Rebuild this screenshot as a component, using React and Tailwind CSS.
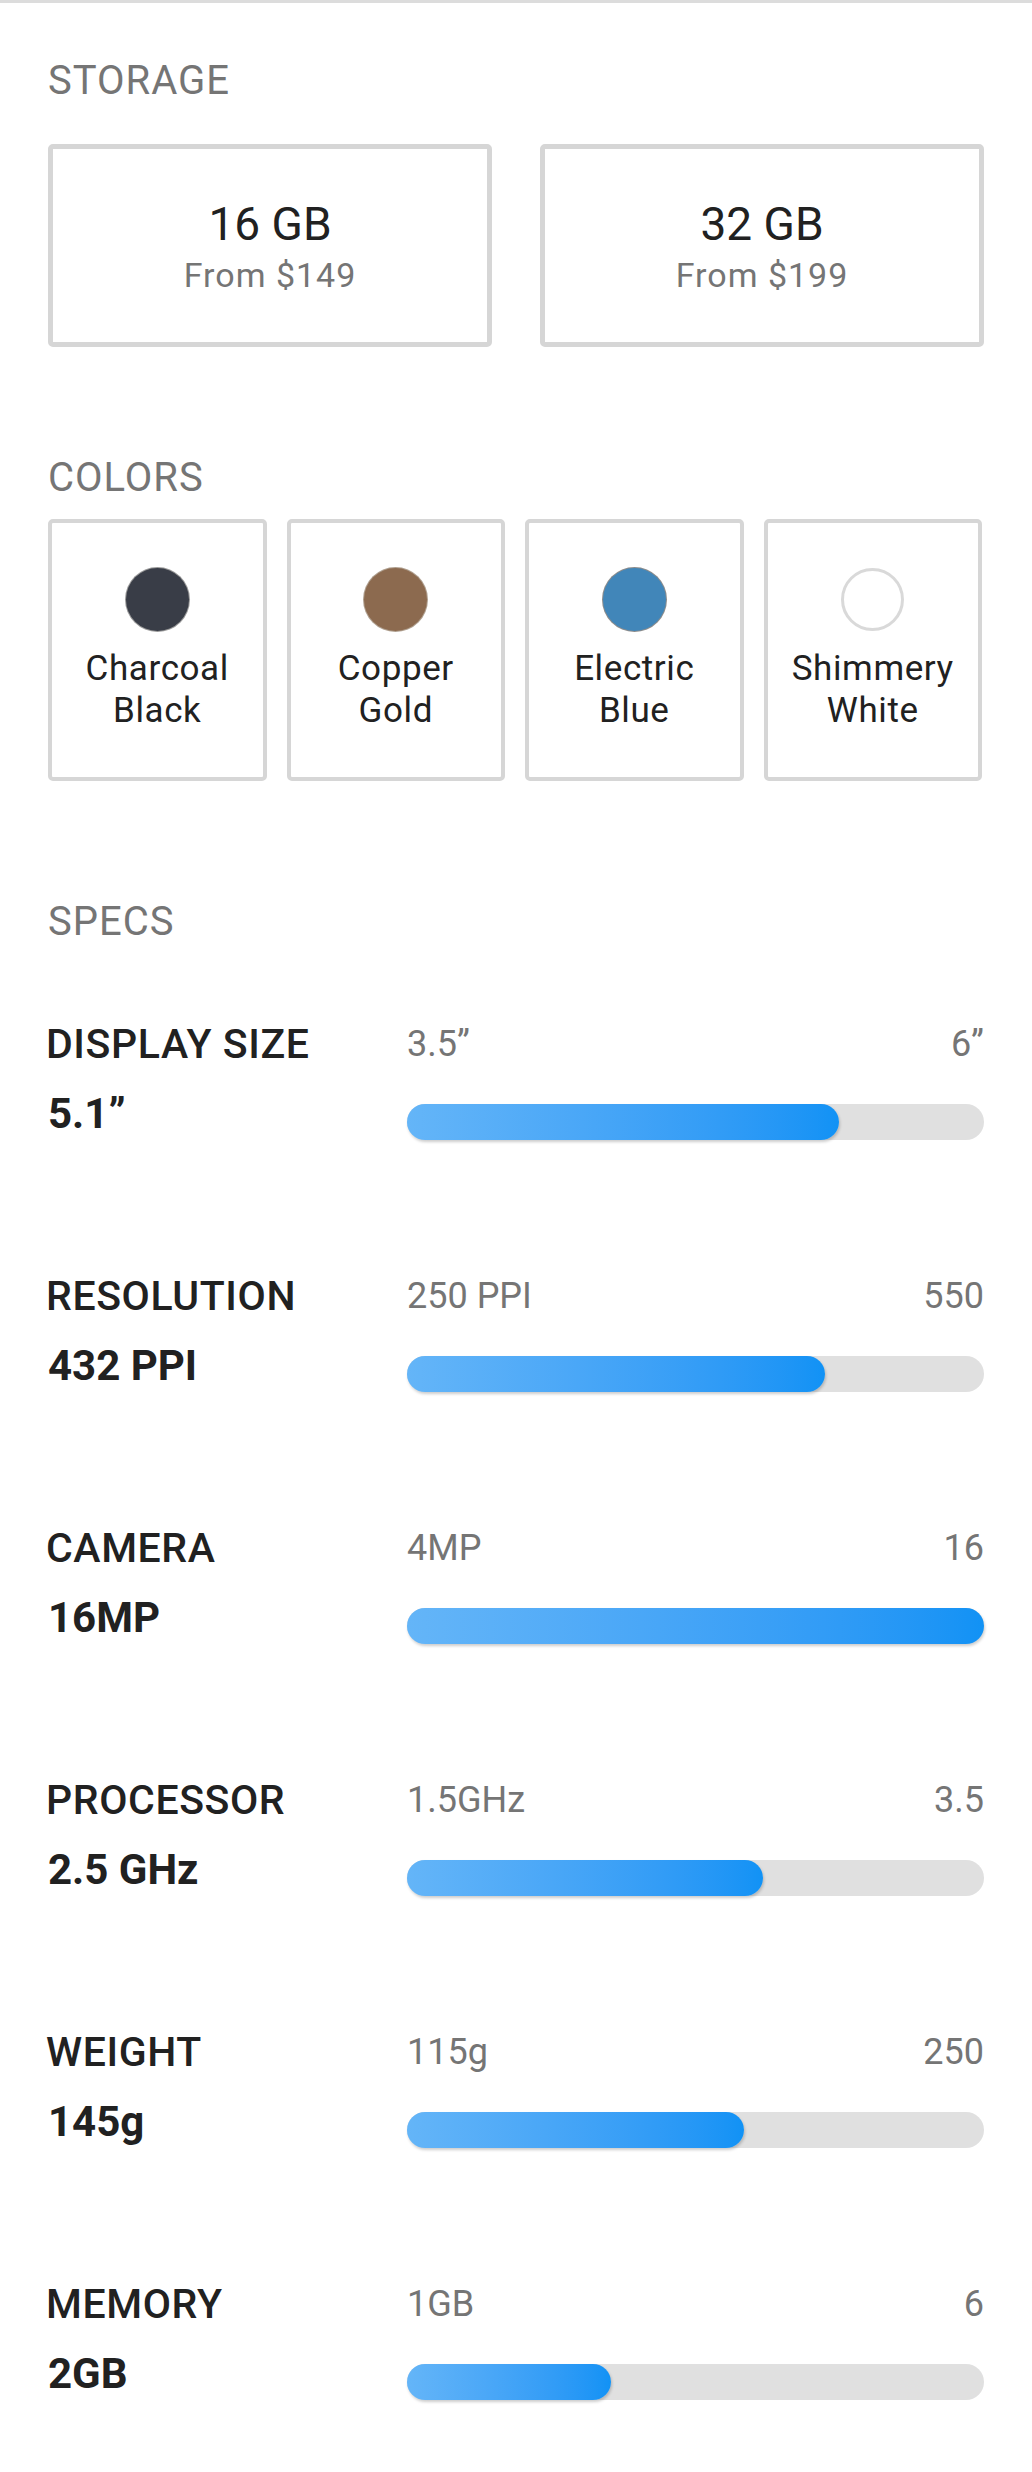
const storage = [
    { size: '16 GB', price: 'From $149' },
    { size: '32 GB', price: 'From $199' },
];

const colors = [
    { name: ['Charcoal', 'Black'], swatch: 'bg-[#393d47] ring-1 ring-[#9a9a9a]' },
    { name: ['Copper', 'Gold'], swatch: 'bg-[#8c6a4f] ring-1 ring-[#b0a090]' },
    { name: ['Electric', 'Blue'], swatch: 'bg-[#4186b9] ring-1 ring-[#8c8c8c]' },
    { name: ['Shimmery', 'White'], swatch: 'bg-white border-[3px] border-[#d9d9d9]' },
];

const specs = [
    { label: 'DISPLAY SIZE', value: '5.1\u201D', min: '3.5\u201D', max: '6\u201D', fill: 74.9 },
    { label: 'RESOLUTION', value: '432 PPI', min: '250 PPI', max: '550', fill: 72.4 },
    { label: 'CAMERA', value: '16MP', min: '4MP', max: '16', fill: 100 },
    { label: 'PROCESSOR', value: '2.5 GHz', min: '1.5GHz', max: '3.5', fill: 61.7 },
    { label: 'WEIGHT', value: '145g', min: '115g', max: '250', fill: 58.4 },
    { label: 'MEMORY', value: '2GB', min: '1GB', max: '6', fill: 35.4 },
];

const SectionTitle = ({ children }) => (
    <h2 className="text-[40px] leading-[48px] tracking-[1px] text-[#757575] font-normal">{children}</h2>
);

const App = () => {
    return (
        <div
            className="w-[1032px] min-h-[2472px] bg-white border-t-[3px] border-[#dcdcdc] px-[48px] pt-[54px]"
            style={{ fontFamily: 'Roboto, "Noto Sans", sans-serif' }}
        >
            {/* storage */}
            <SectionTitle>STORAGE</SectionTitle>
            <div className="grid grid-cols-2 gap-[48px] mt-[39px]">
                {storage.map((item) => (
                    <div
                        key={item.size}
                        className="h-[203px] border-[5px] border-[#d6d6d6] rounded-[5px] flex flex-col items-center justify-center"
                    >
                        <div className="text-[46px] leading-[54px] text-[#212121]">{item.size}</div>
                        <div className="text-[34px] leading-[40px] tracking-[1px] text-[#757575] mt-[4px]">{item.price}</div>
                    </div>
                ))}
            </div>

            {/* colors */}
            <div className="mt-[107px]">
                <SectionTitle>COLORS</SectionTitle>
            </div>
            <div className="w-[934px] grid grid-cols-4 gap-[20px] mt-[17px]">
                {colors.map((c) => (
                    <div
                        key={c.name[0]}
                        className="h-[262px] border-[4px] border-[#d6d6d6] rounded-[5px] flex flex-col items-center justify-center"
                    >
                        <div className={`w-[63px] h-[63px] rounded-full ${c.swatch}`} />
                        <div className="mt-[17px] text-center text-[35px] leading-[42px] tracking-[0.6px] text-[#212121]">
                            <div>{c.name[0]}</div>
                            <div>{c.name[1]}</div>
                        </div>
                    </div>
                ))}
            </div>

            {/* specs */}
            <div className="mt-[117px]">
                <SectionTitle>SPECS</SectionTitle>
            </div>
            <div className="mt-[74px] flex flex-col gap-[132px]">
                {specs.map((s) => (
                    <div key={s.label} className="flex">
                        <div className="w-[359px] shrink-0">
                            <div className="-ml-[2px] text-[41px] leading-[48px] tracking-[0.6px] font-medium text-[#212121]">{s.label}</div>
                            <div className="mt-[22px] text-[42px] leading-[48px] font-bold text-[#212121]">{s.value}</div>
                        </div>
                        <div className="flex-1">
                            <div className="mt-[2px] flex justify-between text-[36px] leading-[44px] text-[#757575]">
                                <span>{s.min}</span>
                                <span>{s.max}</span>
                            </div>
                            <div className="mt-[38px] h-[36px] rounded-full bg-[#e0e0e0]">
                                <div
                                    className="h-full rounded-full bg-gradient-to-r from-[#64b5f8] to-[#1192f5] shadow-[1px_2px_3px_rgba(0,0,0,0.2)]"
                                    style={{ width: `${s.fill}%` }}
                                />
                            </div>
                        </div>
                    </div>
                ))}
            </div>
        </div>
    );
};

export default App;
